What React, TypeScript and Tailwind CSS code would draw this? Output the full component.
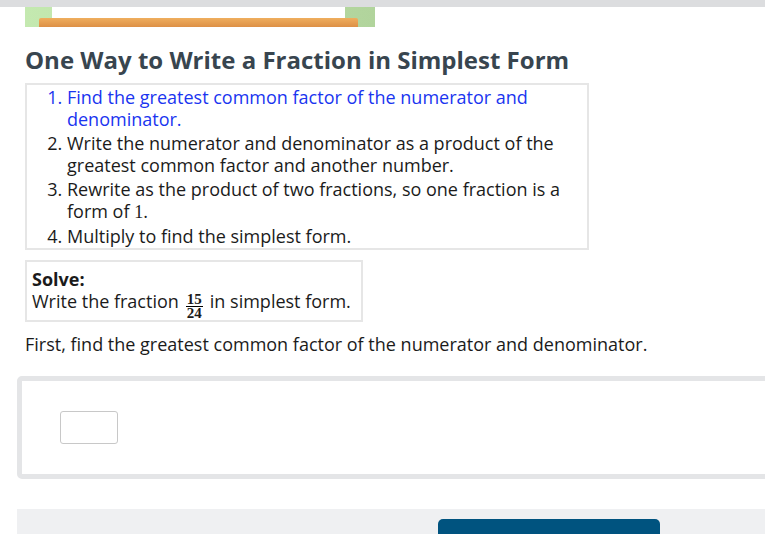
const font = { fontFamily: "'Open Sans', 'Noto Sans', sans-serif" };

const steps = [
  {
    text: "Find the greatest common factor of the numerator and denominator.",
    active: true,
  },
  {
    text: "Write the numerator and denominator as a product of the greatest common factor and another number.",
  },
  {
    text: "Rewrite as the product of two fractions, so one fraction is a form of",
    math: "1",
  },
  { text: "Multiply to find the simplest form." },
];

function Fraction({ top, bottom }: { top: string; bottom: string }) {
  return (
    <span className="mx-[7px] inline-flex translate-y-[3px] flex-col items-center align-middle font-['Liberation_Serif',serif] text-[15px] leading-[13px] font-bold">
      <span className="px-[1px]">{top}</span>
      <span className="h-px w-full bg-black" />
      <span className="px-[1px]">{bottom}</span>
    </span>
  );
}

export default function App() {
  return (
    <div className="relative h-[534px] w-[765px] overflow-hidden bg-white text-[18px] text-[#1b1b1b]" style={font}>
      <div className="h-[7px] bg-[#dcdddf]" />
      <div className="ml-[25px] h-[20px] w-[350px] bg-gradient-to-r from-[#c4e9b0] to-[#b1d49c]">
        <div className="ml-[27px] h-[11px] w-[293px] bg-white" />
        <div className="ml-[14px] h-[9px] w-[319px] rounded-t-[2px] bg-gradient-to-b from-[#efae5e] to-[#dd9046]" />
      </div>

      <h1 className="ml-[25px] mt-[17px] text-[24px] leading-[32px] font-bold text-[#38454f]">
        One Way to Write a Fraction in Simplest Form
      </h1>

      <div className="ml-[25px] mt-[7px] w-[564px] border-2 border-[#e6e6e6] pt-[1px] pb-[1px]">
        <ol className="list-decimal pl-[40px] leading-[22px]">
          {steps.map((step, index) => (
            <li
              key={index}
              className={`${index > 0 ? "mt-[2px]" : ""} ${step.active ? "text-[#1a35f0]" : ""}`}
            >
              {step.text}
              {step.math && (
                <>
                  {" "}
                  <span className="font-['Liberation_Serif',serif] text-[18px] leading-[22px]">{step.math}</span>.
                </>
              )}
            </li>
          ))}
        </ol>
      </div>

      <div className="ml-[25px] mt-[10px] w-[338px] border-2 border-[#e6e6e6] px-[5px] pt-[6px] pb-[6px] leading-[22px]">
        <div className="font-bold">Solve:</div>
        <div className="h-[24px]">
          Write the fraction
          <Fraction top="15" bottom="24" />
          in simplest form.
        </div>
      </div>

      <p className="ml-[25px] mt-[10px] leading-[24px]">
        First, find the greatest common factor of the numerator and denominator.
      </p>

      <div className="ml-[17px] mt-[20px] h-[103px] w-[800px] rounded-[5px] border-[5px] border-[#e4e5e7] pl-[38px] pt-[30px]">
        <div className="h-[33px] w-[58px] rounded-[3px] border border-[#c8c8c8] bg-white" />
      </div>

      <div className="ml-[17px] mt-[30px] h-[40px] w-[800px] bg-[#eff0f2] pl-[421px] pt-[10px]">
        <div className="h-[30px] w-[222px] rounded-t-[5px] bg-[#00537f]" />
      </div>
    </div>
  );
}
